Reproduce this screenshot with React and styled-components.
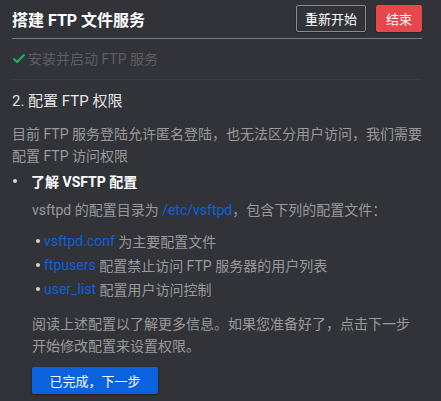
import React from "react";
import styled, { createGlobalStyle } from "styled-components";

const GlobalStyle = createGlobalStyle`
  html, body {
    margin: 0;
    padding: 0;
    background: #313338;
  }
  body {
    font-family: Roboto, "Noto Sans CJK SC", sans-serif;
  }
`;

const Page = styled.div`
  width: 441px;
  height: 401px;
  box-sizing: border-box;
  padding: 5px 19px 0 12px;
  background: #313338;
  overflow: hidden;
`;

const Header = styled.div`
  display: flex;
  align-items: center;
  justify-content: space-between;
  height: 27px;
  padding-bottom: 6px;
  border-bottom: 1px solid #7b7b7e;
`;

const Title = styled.h1`
  margin: 0;
  font-size: 16px;
  font-weight: 700;
  color: #ffffff;
`;

const Actions = styled.div`
  display: flex;
  gap: 10px;
`;

const HeadButton = styled.button`
  width: ${(p) => (p.$danger ? "46px" : "70px")};
  height: 27px;
  box-sizing: border-box;
  padding: 0;
  border-radius: 2px;
  border: 1px solid ${(p) => (p.$danger ? "#e5474a" : "#8a8a8c")};
  background: ${(p) => (p.$danger ? "#e5474a" : "transparent")};
  color: #fff;
  font-family: inherit;
  font-size: 13px;
  box-shadow: 0 1px 2px rgba(0, 0, 0, 0.35);
`;

const DoneStep = styled.div`
  display: flex;
  align-items: center;
  gap: 2px;
  height: 38px;
  padding-bottom: 2px;
  border-bottom: 1px solid #3a3c41;
  font-size: 14px;
  color: #5b5e63;
`;

const StepTitle = styled.h2`
  margin: 0;
  padding: 9px 0 0;
  height: 34px;
  font-size: 15px;
  font-weight: 400;
  color: #e6e6e6;
`;

const Para = styled.p`
  margin: ${(p) => p.$margin || "0"};
  font-size: 14px;
  line-height: 22px;
  color: #9a9a9c;
`;

const Section = styled.div`
  display: flex;
  align-items: center;
  margin-top: 3px;
  height: 22px;
`;

const Dot = styled.span`
  width: 4px;
  height: 4px;
  border-radius: 50%;
  background: #d6d6d6;
  margin: 0 ${(p) => p.$gap || "14px"} 0 ${(p) => p.$left || "1px"};
  flex: none;
`;

const SectionTitle = styled.span`
  font-size: 14px;
  font-weight: 700;
  color: #ffffff;
`;

const Body = styled.div`
  padding-left: 20px;
`;

const Link = styled.span`
  color: #0c62d8;
`;

const FileList = styled.ul`
  list-style: none;
  margin: 8px 0 0;
  padding: 0;
`;

const FileItem = styled.li`
  display: flex;
  align-items: center;
  height: 24px;
  font-size: 14px;
  color: #9a9a9c;
`;

const NextButton = styled.button`
  display: block;
  margin-top: 10px;
  width: 126px;
  height: 27px;
  border: none;
  border-radius: 2px;
  background: #0b62df;
  color: #fff;
  font-family: inherit;
  font-size: 13px;
  box-shadow: 0 1px 3px rgba(0, 0, 0, 0.4);
`;

const Check = () => (
  <svg width="14" height="14" viewBox="0 0 14 14">
    <path d="M1.5 7.5 L5 11 L12.5 3.5" fill="none" stroke="#22b35e" strokeWidth="2" />
  </svg>
);

const files = [
  { name: "vsftpd.conf", desc: "为主要配置文件" },
  { name: "ftpusers", desc: "配置禁止访问 FTP 服务器的用户列表" },
  { name: "user_list", desc: "配置用户访问控制" },
];

export default function App() {
  return (
    <>
      <GlobalStyle />
      <Page>
        <Header>
          <Title>搭建 FTP 文件服务</Title>
          <Actions>
            <HeadButton>重新开始</HeadButton>
            <HeadButton $danger>结束</HeadButton>
          </Actions>
        </Header>
        <DoneStep>
          <Check />
          安装并启动 FTP 服务
        </DoneStep>
        <StepTitle>2. 配置 FTP 权限</StepTitle>
        <Para>目前 FTP 服务登陆允许匿名登陆，也无法区分用户访问，我们需要配置 FTP 访问权限</Para>
        <Section>
          <Dot />
          <SectionTitle>了解 VSFTP 配置</SectionTitle>
        </Section>
        <Body>
          <Para $margin="7px 0 0">
            vsftpd 的配置目录为 <Link>/etc/vsftpd</Link>，包含下列的配置文件：
          </Para>
          <FileList>
            {files.map((f) => (
              <FileItem key={f.name}>
                <Dot $left="4px" $gap="4px" />
                <Link>{f.name}</Link>&nbsp;{f.desc}
              </FileItem>
            ))}
          </FileList>
          <Para $margin="12px 0 0">
            阅读上述配置以了解更多信息。如果您准备好了，点击下一步开始修改配置来设置权限。
          </Para>
          <NextButton>已完成，下一步</NextButton>
        </Body>
      </Page>
    </>
  );
}
